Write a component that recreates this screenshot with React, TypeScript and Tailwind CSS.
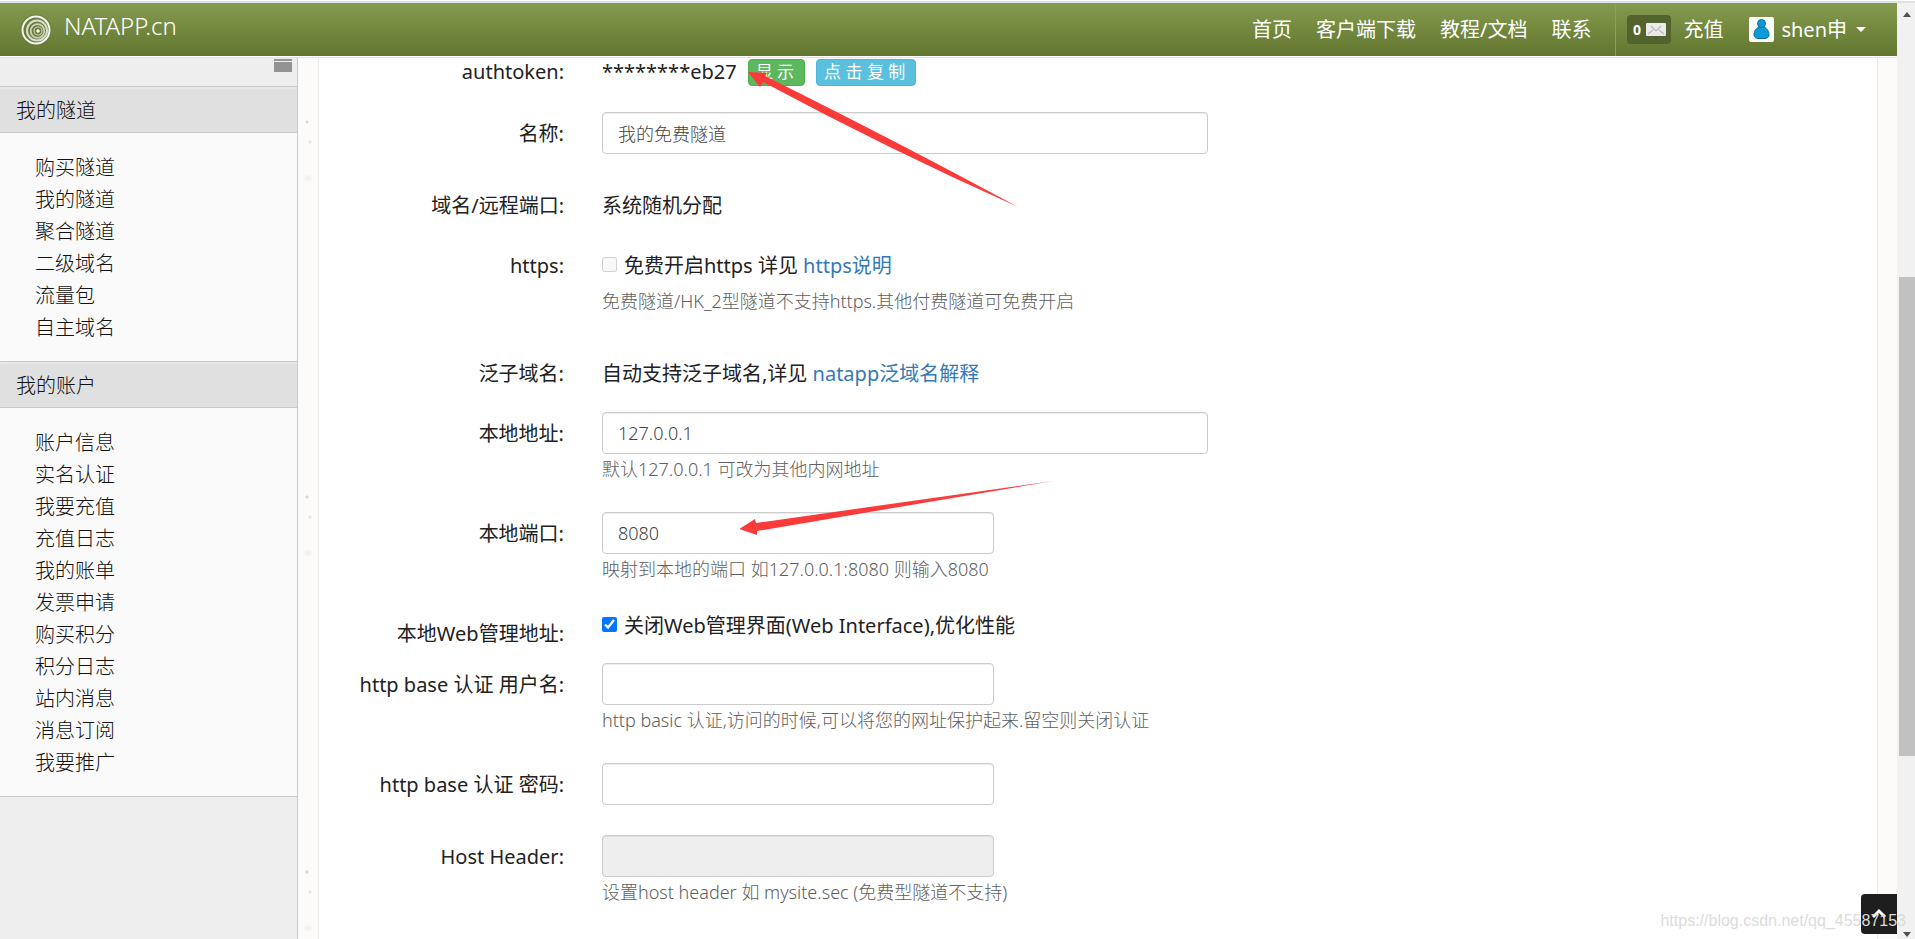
import React, { useState } from 'react';

const tunnelMenu = ['购买隧道', '我的隧道', '聚合隧道', '二级域名', '流量包', '自主域名'];
const accountMenu = ['账户信息', '实名认证', '我要充值', '充值日志', '我的账单', '发票申请', '购买积分', '积分日志', '站内消息', '消息订阅', '我要推广'];
const navLinks = ['首页', '客户端下载', '教程/文档', '联系'];

const inputClass = 'block h-[42px] max-w-full rounded border border-[#ccc] bg-white px-[15px] text-[18px] font-light text-[#444] shadow-[inset_0_1px_1px_rgba(0,0,0,0.075)] outline-none disabled:bg-[#eee]';
const smallButton = 'ml-[11px] h-[27px] rounded border pl-[7px] pr-[10px] text-[17px] leading-6 text-white';

const Logo = () => (
  <svg className="h-8 w-8" viewBox="0 0 32 32" fill="none" stroke="#f4f7ee">
    <circle cx="16" cy="16" r="15.5" stroke="none" fill="#64783a" fillOpacity="0.7" />
    <circle cx="16" cy="16" r="13.5" strokeWidth="2" />
    <circle cx="17" cy="16.5" r="10" strokeWidth="2" strokeOpacity="0.8" />
    <circle cx="17.5" cy="17" r="6.8" strokeWidth="1.8" strokeOpacity="0.7" />
    <circle cx="18" cy="17" r="4" strokeWidth="1.2" strokeOpacity="0.7" />
    <circle cx="18" cy="17" r="1.8" fill="#fff" stroke="none" />
  </svg>
);

const MailIcon = () => (
  <svg className="h-[13px] w-5" viewBox="0 0 20 13">
    <rect width="20" height="13" rx="1" fill="#eceae9" />
    <path d="M5 3l5 5 5-5M2 11l5-4M18 11l-5-4" fill="none" stroke="#b9b9b9" strokeWidth="1.2" />
  </svg>
);

const UserIcon = () => (
  <svg className="h-[25px] w-[25px]" viewBox="0 0 25 25">
    <rect width="25" height="25" rx="2" fill="#fff" />
    <path d="M10 10c-4 2-5 5-5 8 0 2 2 3.500 4 3.500h7c2 0 4-1.500 4-3.500 0-3-1-6-5-8z" fill="#0d9bd8" stroke="#0a6f9f" />
    <circle cx="12.500" cy="6.500" r="4" fill="#0d9bd8" stroke="#0a6f9f" />
  </svg>
);

const SideSection = ({ title, items }: { title: string; items: string[] }) => (
  <section>
    <h2 className="h-[47px] border-y border-[#c9c9c9] bg-[#e0e0e0] pl-4 pt-px text-[20px] leading-[45px] text-[#111] shadow-[inset_0_2px_1px_#e8e8e8]">{title}</h2>
    <ul className="bg-[#fafafa] pb-[17px] pt-[19px]">
      {items.map(item => (
        <li key={item} className="pl-[35px] text-[20px] leading-8">
          <a href="#" className="text-[#111]">{item}</a>
        </li>
      ))}
    </ul>
  </section>
);

interface RowProps {
  label: string;
  htmlFor?: string;
  help?: string;
  className?: string;
  children: React.ReactNode;
}

const Row = ({ label, htmlFor, help, className = '', children }: RowProps) => (
  <div className={`flex ${className}`}>
    <label htmlFor={htmlFor} className="mr-[38px] h-[42px] w-[245px] shrink-0 pt-px text-right leading-[42px]">{label}</label>
    <div className="min-w-0 flex-1">
      <div className="flex min-h-[42px] items-center">{children}</div>
      {help && <p className="text-[18px] font-light leading-[30px] text-[#606060]">{help}</p>}
    </div>
  </div>
);

export default function App() {
  const [form, setForm] = useState({
    name: '我的免费隧道',
    address: '127.0.0.1',
    port: '8080',
    closeWeb: true,
    user: '',
    password: ''
  });

  const update = (key: string) => (e: React.ChangeEvent<HTMLInputElement>) => {
    setForm({ ...form, [key]: e.target.value });
  };

  return (
    <div className="relative flex h-screen flex-col overflow-hidden bg-white font-['Noto_Sans','Noto_Sans_CJK_SC',sans-serif] text-[20px] text-[#222]">
      <div className="mt-px h-[2px] shrink-0 bg-[#dee1e6]" />

      <div className="flex min-h-0 flex-1">
        <div className="flex min-w-0 flex-1 flex-col">

          {/* Top bar */}
          <header className="flex h-[53px] shrink-0 items-center bg-linear-to-b from-[#849b4e] to-[#62762f] text-white">
            <a href="#" className="ml-5 flex items-center gap-3">
              <Logo />
              <span className="pb-2 text-[24px] font-light">NATAPP.cn</span>
            </a>
            <nav className="ml-auto flex gap-6 pr-6">
              {navLinks.map(link => <a key={link} href="#">{link}</a>)}
            </nav>
            <div className="flex h-[53px] items-center self-start border-l border-[#8ba251] pl-[11px]">
              <a href="#" className="flex h-[29px] w-11 items-center justify-center gap-[5px] rounded bg-[#52632e] text-[14px] font-bold">
                0 <MailIcon />
              </a>
              <a href="#" className="ml-3">充值</a>
              <a href="#" className="ml-[26px] mr-[31px] flex items-center">
                <UserIcon />
                <span className="ml-[7px] mr-[9px]">shen申</span>
                <span className="border-x-[5px] border-t-[5px] border-x-transparent border-t-white" />
              </a>
            </div>
          </header>
          <div className="h-[2px] shrink-0 border-b border-[#e3e3e3]" />

          <div className="flex min-h-0 flex-1">
            {/* Sidebar */}
            <aside className="w-[298px] shrink-0 border-r border-[#c9c9c9] bg-[#eee] font-light">
              <div className="flex h-7 justify-end pr-[5px] pt-px">
                <button type="button" aria-label="menu" className="flex h-[13px] w-[18px] flex-col gap-px">
                  <span className="h-[2px] w-full bg-[#939393]" />
                  <span className="w-full flex-1 bg-[#939393]" />
                </button>
              </div>
              <SideSection title={'我的隧道'} items={tunnelMenu} />
              <SideSection title={'我的账户'} items={accountMenu} />
              <div className="border-t border-[#c9c9c9]" />
            </aside>

            {/* Tunnel settings */}
            <main className="min-w-0 flex-1 bg-[#fcfbfa] bg-[radial-gradient(circle_at_9px_64px,#d8d6d3_1px,transparent_2px),radial-gradient(circle_at_12px_84px,#e8e6e3_1px,transparent_2px),radial-gradient(ellipse_6px_4px_at_10px_120px,#efedeb,transparent)] bg-size-[375px_375px] pl-5 pr-[19px]">
              <form className="h-full border-x border-[#ebebeb] bg-white" onSubmit={e => e.preventDefault()}>
                <div className="mb-[26px] flex h-7 items-center">
                  <span className="mr-[38px] w-[245px] shrink-0 text-right">authtoken:</span>
                  <span>********eb27</span>
                  <button type="button" className={`${smallButton} border-[#4cae4c] bg-[#5cb85c]`}>显 示</button>
                  <button type="button" className={`${smallButton} border-[#46b8da] bg-[#5bc0de]`}>点 击 复 制</button>
                </div>

                <Row label="名称:" htmlFor="name" className="mb-[30px]">
                  <input id="name" className={`${inputClass} w-[606px]`} value={form.name} onChange={update('name')} />
                </Row>

                <Row label="域名/远程端口:" className="mb-[18px]">
                  <span className="pt-[2px]">系统随机分配</span>
                </Row>

                <Row label="https:" htmlFor="https" className="mb-9" help="免费隧道/HK_2型隧道不支持https.其他付费隧道可免费开启">
                  <input id="https" type="checkbox" disabled className="mb-px mr-[7px] h-[15px] w-[15px]" />
                  <span className="pt-[2px]">免费开启https 详见 <a href="#" className="text-[#337ab7]">https说明</a></span>
                </Row>

                <Row label="泛子域名:" className="mb-[18px]">
                  <span className="pt-[2px]">自动支持泛子域名,详见 <a href="#" className="text-[#337ab7]">natapp泛域名解释</a></span>
                </Row>

                <Row label="本地地址:" htmlFor="address" className="mb-7" help="默认127.0.0.1 可改为其他内网地址">
                  <input id="address" className={`${inputClass} w-[606px]`} value={form.address} onChange={update('address')} />
                </Row>

                <Row label="本地端口:" htmlFor="port" className="mb-7" help="映射到本地的端口 如127.0.0.1:8080 则输入8080">
                  <input id="port" className={`${inputClass} w-[392px]`} value={form.port} onChange={update('port')} />
                </Row>

                <Row label="本地Web管理地址:" htmlFor="closeWeb" className="mb-[9px]">
                  <span className="flex items-center self-start leading-7">
                    <input id="closeWeb" type="checkbox" className="mb-[3px] mr-[7px] h-[15px] w-[15px] accent-[#0075ff]" checked={form.closeWeb} onChange={e => setForm({ ...form, closeWeb: e.target.checked })} />
                    关闭Web管理界面(Web Interface),优化性能
                  </span>
                </Row>

                <Row label="http base 认证 用户名:" htmlFor="user" className="mb-7" help="http basic 认证,访问的时候,可以将您的网址保护起来.留空则关闭认证">
                  <input id="user" className={`${inputClass} w-[392px]`} value={form.user} onChange={update('user')} />
                </Row>

                <Row label="http base 认证 密码:" htmlFor="password" className="mb-[30px]">
                  <input id="password" className={`${inputClass} w-[392px]`} value={form.password} onChange={update('password')} />
                </Row>

                <Row label="Host Header:" htmlFor="host" help="设置host header 如 mysite.sec (免费型隧道不支持)">
                  <input id="host" disabled className={`${inputClass} w-[392px]`} />
                </Row>
              </form>
            </main>
          </div>
        </div>

        {/* Scrollbar */}
        <div className="flex w-[18px] shrink-0 flex-col items-center bg-[#f1f1f1] pl-[2px]">
          <span className="mt-[9px] border-x-[4px] border-b-[5px] border-x-transparent border-b-[#505050]" />
          <div className="mt-[260px] h-[479px] w-full bg-[#c1c1c1]" />
          <span className="mb-[2px] mt-auto border-x-[4px] border-t-[5px] border-x-transparent border-t-[#505050]" />
        </div>
      </div>

      <button type="button" aria-label="top" className="absolute bottom-[5px] right-[18px] flex h-10 w-9 items-center justify-center rounded-l bg-[#1e1e1e]">
        <svg className="h-4 w-4" viewBox="0 0 16 16" fill="none" stroke="#fff" strokeWidth="3">
          <path d="M2 11l6-6 6 6" />
        </svg>
      </button>
      <span className="absolute bottom-[6px] right-[9px] font-['Liberation_Sans',sans-serif] text-[16px] text-[#dcdcdc]">https://blog.csdn.net/qq_45587153</span>

      {/* Pointers */}
      <svg className="pointer-events-none absolute left-[740px] top-[60px] h-[500px] w-[330px]" viewBox="740 60 330 500" fill="#fb3a3a">
        <path d="M748 72L767 73L765 76Q900 143 1018 207Q890 150 763 82L760 87Z" />
        <path d="M739 529L755 519L756 523L1053 481L757 531L757 535Z" />
      </svg>
    </div>
  );
}
